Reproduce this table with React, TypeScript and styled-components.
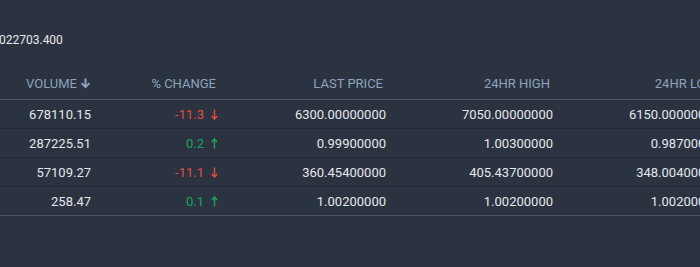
import React from "react";
import styled, { createGlobalStyle } from "styled-components";

const Global = createGlobalStyle`
  html, body { margin: 0; padding: 0; background: #2b3340; }
  body { font-family: Roboto, "Liberation Sans", Arial, sans-serif; overflow: hidden; }
`;

const Page = styled.div`
  width: 700px;
  height: 267px;
  overflow: hidden;
  background: #2b3340;
  color: #e1e5ea;
`;

const Summary = styled.div`
  font-size: 12px;
  line-height: 14px;
  padding-top: 33px;
  margin-left: -1px;
  color: #e6e9ee;
  white-space: nowrap;
`;

const Table = styled.div`
  margin-top: 21px;
  width: 900px;
`;

const cols = "91px 127px 168px 167px 167px 180px";

const HeaderRow = styled.div`
  display: grid;
  grid-template-columns: ${cols};
  height: 31px;
  align-items: center;
  border-bottom: 1px solid #4b5463;
`;

const HeadCell = styled.div<{ $pad?: number }>`
  display: flex;
  justify-content: flex-end;
  align-items: center;
  gap: 3px;
  padding-right: ${(p) => p.$pad ?? 0}px;
  font-size: 13px;
  color: #8fa2bf;
  text-transform: uppercase;
  white-space: nowrap;
`;

const Row = styled.div<{ $last?: boolean }>`
  display: grid;
  grid-template-columns: ${cols};
  height: 28px;
  align-items: center;
  border-bottom: 1px solid ${(p) => (p.$last ? "#4b5463" : "#232a35")};
`;

const Cell = styled.div`
  text-align: right;
  font-size: 13px;
  color: #e4e7ec;
  white-space: nowrap;
`;

const Change = styled.div<{ $up: boolean }>`
  display: flex;
  justify-content: flex-end;
  align-items: center;
  gap: 7px;
  font-size: 13px;
  color: ${(p) => (p.$up ? "#1ea25a" : "#ea4a3c")};
`;

const SortArrow = () => (
  <svg width="11" height="11" viewBox="0 0 11 11">
    <path d="M5.5 10.5 L0.8 5.8 L2.2 4.4 L4.5 6.7 L4.5 0.5 L6.5 0.5 L6.5 6.7 L8.8 4.4 L10.2 5.8 Z" fill="#8fa2bf" />
  </svg>
);

const ThinArrow = ({ up, color }: { up: boolean; color: string }) => (
  <svg width="7" height="11" viewBox="0 0 7 11" style={{ transform: up ? "rotate(180deg)" : undefined }}>
    <path d="M3.5 0.5 V10 M0.8 7 L3.5 10 L6.2 7" stroke={color} strokeWidth="1.4" fill="none" />
  </svg>
);

const rows = [
  { vol: "678110.15", ch: "-11.3", up: false, last: "6300.00000000", high: "7050.00000000", low: "6150.00000000" },
  { vol: "287225.51", ch: "0.2", up: true, last: "0.99900000", high: "1.00300000", low: "0.98700000" },
  { vol: "57109.27", ch: "-11.1", up: false, last: "360.45400000", high: "405.43700000", low: "348.00400000" },
  { vol: "258.47", ch: "0.1", up: true, last: "1.00200000", high: "1.00200000", low: "1.00200000" },
];

export default function App() {
  return (
    <Page>
      <Global />
      <Summary>022703.400</Summary>
      <Table>
        <HeaderRow>
          <HeadCell>
            Volume <SortArrow />
          </HeadCell>
          <HeadCell $pad={2}>% Change</HeadCell>
          <HeadCell $pad={3}>Last Price</HeadCell>
          <HeadCell $pad={3}>24hr High</HeadCell>
          <HeadCell $pad={3}>24hr Low</HeadCell>
          <HeadCell />
        </HeaderRow>
        {rows.map((r, i) => (
          <Row key={i} $last={i === rows.length - 1}>
            <Cell>{r.vol}</Cell>
            <Change $up={r.up}>
              <span>{r.ch}</span>
              <ThinArrow up={r.up} color={r.up ? "#1ea25a" : "#ea4a3c"} />
            </Change>
            <Cell>{r.last}</Cell>
            <Cell>{r.high}</Cell>
            <Cell>{r.low}</Cell>
            <Cell />
          </Row>
        ))}
      </Table>
    </Page>
  );
}
